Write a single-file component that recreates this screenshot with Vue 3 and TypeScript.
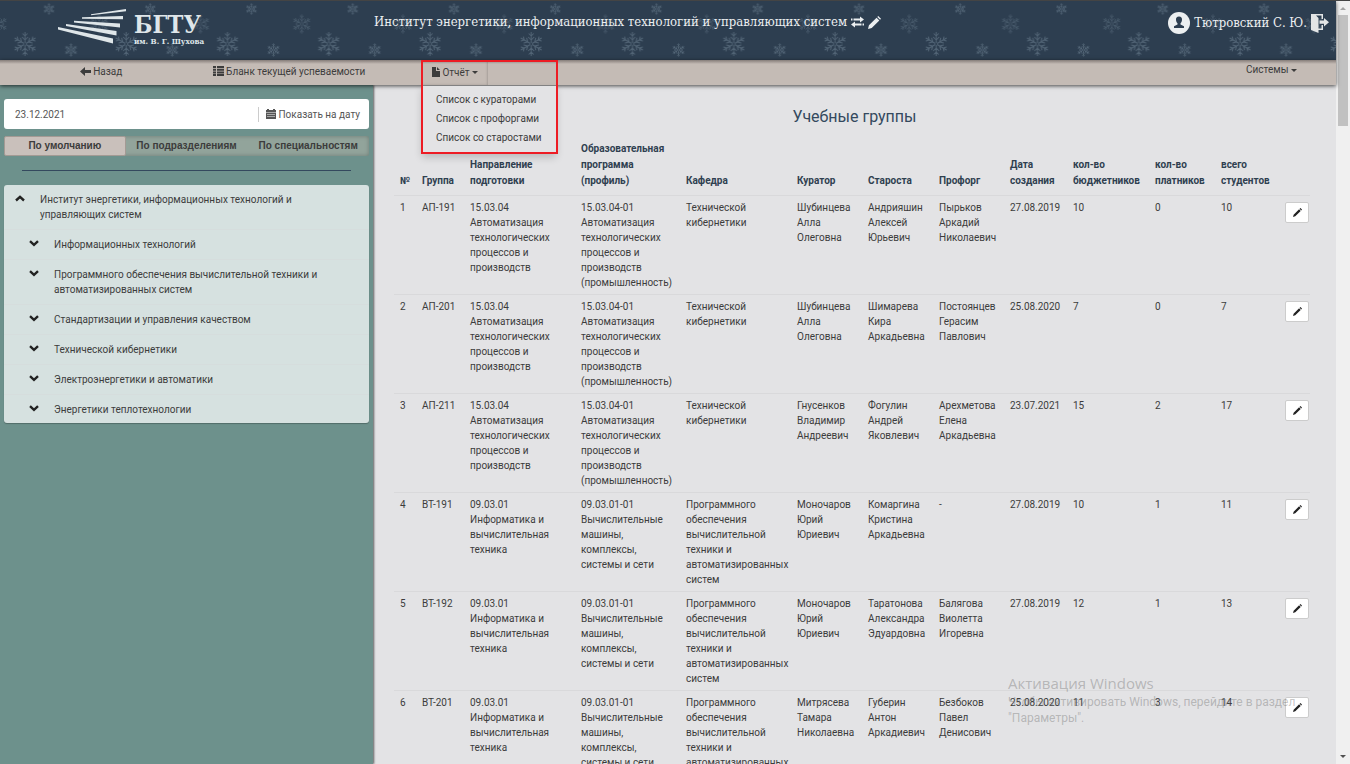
<script setup lang="ts">
import { ref } from 'vue'

interface Group {
  name: string
  direction: string
  programme: string
  department: string
  curator: string
  headman: string
  proforg: string
  created: string
  budget: number
  paid: number
  total: number
}

const date = ref('23.12.2021')
const reports: string[] = ['Список с кураторами', 'Список с профоргами', 'Список со старостами']
const modes: string[] = ['По умолчанию', 'По подразделениям', 'По специальностям']
const activeMode = ref(0)
const departments: string[] = [
  'Информационных технологий',
  'Программного обеспечения вычислительной техники и автоматизированных систем',
  'Стандартизации и управления качеством',
  'Технической кибернетики',
  'Электроэнергетики и автоматики',
  'Энергетики теплотехнологии',
]
const columns: string[] = [
  '№', 'Группа', 'Направление подготовки', 'Образовательная программа (профиль)', 'Кафедра', 'Куратор',
  'Староста', 'Профорг', 'Дата создания', 'кол-во бюджетников', 'кол-во платников', 'всего студентов',
]

const automation = {
  direction: '15.03.04 Автоматизация технологических процессов и производств',
  programme: '15.03.04-01 Автоматизация технологических процессов и производств (промышленность)',
  department: 'Технической кибернетики',
}
const informatics = {
  direction: '09.03.01 Информатика и вычислительная техника',
  programme: '09.03.01-01 Вычислительные машины, комплексы, системы и сети',
  department: 'Программного обеспечения вычислительной техники и автоматизированных систем',
}
const groups: Group[] = [
  { name: 'АП-191', ...automation, curator: 'Шубинцева Алла Олеговна', headman: 'Андрияшин Алексей Юрьевич', proforg: 'Пырьков Аркадий Николаевич', created: '27.08.2019', budget: 10, paid: 0, total: 10 },
  { name: 'АП-201', ...automation, curator: 'Шубинцева Алла Олеговна', headman: 'Шимарева Кира Аркадьевна', proforg: 'Постоянцев Герасим Павлович', created: '25.08.2020', budget: 7, paid: 0, total: 7 },
  { name: 'АП-211', ...automation, curator: 'Гнусенков Владимир Андреевич', headman: 'Фогулин Андрей Яковлевич', proforg: 'Арехметова Елена Аркадьевна', created: '23.07.2021', budget: 15, paid: 2, total: 17 },
  { name: 'ВТ-191', ...informatics, curator: 'Моночаров Юрий Юриевич', headman: 'Комаргина Кристина Аркадьевна', proforg: '-', created: '27.08.2019', budget: 10, paid: 1, total: 11 },
  { name: 'ВТ-192', ...informatics, curator: 'Моночаров Юрий Юриевич', headman: 'Таратонова Александра Эдуардовна', proforg: 'Балягова Виолетта Игоревна', created: '27.08.2019', budget: 12, paid: 1, total: 13 },
  { name: 'ВТ-201', ...informatics, curator: 'Митрясева Тамара Николаевна', headman: 'Губерин Антон Аркадиевич', proforg: 'Безбоков Павел Денисович', created: '25.08.2020', budget: 11, paid: 3, total: 14 },
]
</script>

<template>
  <div class="window">
    <div class="page">
      <header class="top">
        <svg class="snow" aria-hidden="true">
          <defs>
            <g id="flake" fill="none" stroke="#8fa5b5" stroke-width="1">
              <g id="arm"><path d="M0 -1V-12M0 -4L-3 -7M0 -4L3 -7M0 -8L-2.5 -10.5M0 -8L2.5 -10.5" /></g>
              <use href="#arm" transform="rotate(60)" />
              <use href="#arm" transform="rotate(120)" />
              <use href="#arm" transform="rotate(180)" />
              <use href="#arm" transform="rotate(240)" />
              <use href="#arm" transform="rotate(300)" />
            </g>
            <pattern id="snowfall" width="101.25" height="60" patternUnits="userSpaceOnUse">
              <use href="#flake" transform="translate(25 43)" opacity=".36" />
              <use href="#flake" transform="translate(-2 23) scale(.8)" opacity=".28" />
              <use href="#flake" transform="translate(99.25 23) scale(.8)" opacity=".28" />
              <use href="#flake" transform="translate(49 8) scale(.48)" opacity=".48" />
              <use href="#flake" transform="translate(71 49) scale(.55)" opacity=".48" />
            </pattern>
          </defs>
          <rect width="100%" height="100%" fill="url(#snowfall)" />
        </svg>
        <a class="logo" href="#">
          <svg width="70" height="36" viewBox="0 0 70 36" fill="#dfe6e9" aria-hidden="true">
            <path d="M33 5.200 68 0V2.200L33 6.200ZM24 8.200 65 7V10.200L24 9.800ZM16 11.800 62 14.500V18.500L16 13.500ZM8 15 58.500 22V26.500L8 17ZM0 18 55 29.500V34.500L0 20.500Z" />
          </svg>
          <span class="brand"><b>БГТУ</b><small>им. В. Г. Шухова</small></span>
        </a>
        <h1 class="institute">
          Институт энергетики, информационных технологий и управляющих систем
          <button class="plain" aria-label="Сменить институт">
            <svg width="13" height="12" viewBox="0 0 13 12" fill="currentColor"><path d="M0 2.500H1.500V4.500H0ZM2.500 2.500H9V0.500L13 3.500 9 6.500V4.500H2.500ZM13 7.500H11.500V9.500H13ZM10.500 7.500H4V5.500L0 8.500 4 11.500V9.500H10.500Z" /></svg>
          </button>
          <button class="plain" aria-label="Редактировать">
            <svg width="13" height="13" viewBox="0 0 14 14" fill="currentColor"><path d="M0 14 1 10 9.200 1.800 12.200 4.800 4 13ZM10 1 11 0 14 3 13 4Z" /></svg>
          </button>
        </h1>
        <div class="user">
          <svg width="22" height="22" viewBox="0 0 22 22" aria-hidden="true"><circle cx="11" cy="11" r="11" fill="#eceff0" /><path fill="#2d3e50" d="M11 4.500C8.800 4.500 7.800 6 8 8 8.100 9.600 8.800 10.600 9.500 11.300V12.500L6 14.200V16H16V14.200L12.500 12.500V11.300C13.200 10.600 13.900 9.600 14 8 14.200 6 13.200 4.500 11 4.500Z" /></svg>
          <span>Тютровский С. Ю.</span>
          <button class="plain" aria-label="Выйти">
            <svg width="18" height="19" viewBox="0 0 18 19" fill="#e3e5e6"><path d="M0 0H12V5H10.500V1.500H5L7.500 4V19L0 16ZM7.500 14.500H10.500V11H12V16H7.500ZM8.500 6.500H13V4L18 8.200 13 12.500V9.800H8.500Z" /></svg>
          </button>
        </div>
      </header>

      <nav class="menu">
        <a class="back" href="#">
          <svg width="11" height="9" viewBox="0 0 11 9" fill="currentColor"><path d="M0 4.500 5 0V3H11V6H5V9Z" /></svg>
          Назад
        </a>
        <a class="form" href="#">
          <svg width="11" height="10" viewBox="0 0 11 10" fill="currentColor"><path d="M0 0H3V2H0ZM4 0H11V2H4ZM0 2.700H3V4.700H0ZM4 2.700H11V4.700H4ZM0 5.400H3V7.400H0ZM4 5.400H11V7.400H4ZM0 8H3V10H0ZM4 8H11V10H4Z" /></svg>
          Бланк текущей успеваемости
        </a>
        <div class="report">
          <button class="report-toggle" aria-haspopup="true" aria-expanded="true">
            <svg width="8" height="10" viewBox="0 0 8 10" fill="currentColor"><path d="M0 0H4V4H8V10H0ZM5 0 8 3H5Z" /></svg>
            Отчёт
            <i class="caret"></i>
          </button>
          <ul class="report-list">
            <li v-for="item in reports" :key="item"><a href="#">{{ item }}</a></li>
          </ul>
          <div class="highlight"></div>
        </div>
        <button class="systems">Системы <i class="caret"></i></button>
      </nav>

      <div class="content">
        <aside class="side">
          <form class="date" @submit.prevent>
            <input v-model="date" type="text" aria-label="Дата" />
            <button type="submit">
              <svg width="10" height="10" viewBox="0 0 10 10" fill="currentColor"><path d="M0 1H1V0H3V1H7V0H9V1H10V3H0ZM0 3.500H10V10H0Z" /><path d="M1 5.500H9M1 7.500H9" stroke="#fff" stroke-width=".5" /></svg>
              Показать на дату
            </button>
          </form>
          <div class="modes">
            <button
              v-for="(mode, i) in modes"
              :key="mode"
              :class="{ active: i === activeMode }"
              @click="activeMode = i"
            >{{ mode }}</button>
          </div>
          <hr />
          <ul class="tree">
            <li>
              <svg width="10" height="7" viewBox="0 0 10 7"><path d="M1 5.500 5 1.800 9 5.500" fill="none" stroke="#222" stroke-width="2.400" /></svg>
              <a href="#">Институт энергетики, информационных технологий и управляющих систем</a>
            </li>
            <li v-for="item in departments" :key="item" class="child">
              <svg width="10" height="7" viewBox="0 0 10 7"><path d="M1 1.200 5 4.800 9 1.200" fill="none" stroke="#222" stroke-width="2.400" /></svg>
              <a href="#">{{ item }}</a>
            </li>
          </ul>
        </aside>

        <main class="main">
          <h2>Учебные группы</h2>
          <div class="table-box">
            <table>
              <colgroup>
                <col class="w-num" /><col class="w-group" /><col class="w-dir" /><col class="w-prog" /><col class="w-dir" />
                <col class="w-name" /><col class="w-name" /><col class="w-name" /><col class="w-date" /><col class="w-budget" />
                <col class="w-paid" /><col class="w-total" /><col />
              </colgroup>
              <thead>
                <tr>
                  <th v-for="column in columns" :key="column" scope="col">{{ column }}</th>
                  <td></td>
                </tr>
              </thead>
              <tbody>
                <tr v-for="(group, i) in groups" :key="group.name">
                  <td>{{ i + 1 }}</td>
                  <td>{{ group.name }}</td>
                  <td>{{ group.direction }}</td>
                  <td>{{ group.programme }}</td>
                  <td>{{ group.department }}</td>
                  <td>{{ group.curator }}</td>
                  <td>{{ group.headman }}</td>
                  <td>{{ group.proforg }}</td>
                  <td>{{ group.created }}</td>
                  <td>{{ group.budget }}</td>
                  <td>{{ group.paid }}</td>
                  <td>{{ group.total }}</td>
                  <td>
                    <button class="edit" :aria-label="'Редактировать ' + group.name">
                      <svg width="9" height="9" viewBox="0 0 14 14" fill="#222"><path d="M0 14 1 10.500 9.500 2 12 4.500 3.500 13ZM10.300 1.200 11.500 0 14 2.500 12.800 3.700Z" /></svg>
                    </button>
                  </td>
                </tr>
              </tbody>
            </table>
          </div>
        </main>
      </div>
    </div>

    <div class="scrollbar" aria-hidden="true">
      <svg width="14" height="14" viewBox="0 0 14 14"><path d="M4 9 7 6 10 9Z" fill="#a3a3a3" /></svg>
      <div class="thumb"></div>
      <svg width="14" height="14" viewBox="0 0 14 14"><path d="M4 5 7 8 10 5Z" fill="#505050" /></svg>
    </div>

    <div class="activation">
      <strong>Активация Windows</strong>
      <span>Чтобы активировать Windows, перейдите в раздел "Параметры".</span>
    </div>
  </div>
</template>

<style>
body {
  margin: 0;
}
</style>

<style scoped>
* {
  box-sizing: border-box;
}

.window {
  position: relative;
  display: flex;
  height: 100vh;
  overflow: hidden;
  border-top: 1px solid #444;
  background: #e3e3e5;
  color: #3c3c3c;
  font: 10px/15px Roboto, "Liberation Sans", sans-serif;
}

.page {
  display: flex;
  flex: 1;
  flex-direction: column;
  min-width: 0;
}

a {
  color: inherit;
  text-decoration: none;
}

button,
input {
  padding: 0;
  border: 0;
  background: none;
  color: inherit;
  font: inherit;
}

ul {
  margin: 0;
  padding: 0;
  list-style: none;
}

.top {
  position: relative;
  z-index: 2;
  display: flex;
  flex: none;
  align-items: flex-start;
  height: 59px;
  padding: 0 7px 0 58px;
  background: #2d3e50;
  box-shadow: 0 1px 4px rgba(0, 0, 0, 0.7);
  color: #eceff1;
  font-family: "DejaVu Serif Condensed", "DejaVu Serif", serif;
}

.snow {
  position: absolute;
  inset: 0;
  width: 100%;
  height: 100%;
}

.logo,
.institute,
.user {
  position: relative;
}

.logo {
  display: flex;
  flex: none;
  gap: 6px;
  width: 316px;
  padding-top: 8px;
  color: #dfe6e9;
}

.brand b,
.brand small {
  display: block;
}

.brand b {
  font-size: 24px;
  line-height: 32px;
}

.brand small {
  margin-top: -4px;
  font-size: 8px;
  font-weight: bold;
  line-height: 8px;
}

.institute {
  display: flex;
  align-items: center;
  gap: 4px;
  margin: 0;
  padding-top: 11px;
  font-size: 13px;
  font-weight: normal;
  line-height: 20px;
  white-space: nowrap;
}

.user {
  display: flex;
  align-items: center;
  gap: 4px;
  margin-left: auto;
  padding-top: 11px;
  font-size: 13px;
  line-height: 20px;
  white-space: nowrap;
}

.plain svg,
.user svg {
  display: block;
}

.menu {
  position: relative;
  z-index: 3;
  display: flex;
  flex: none;
  height: 25px;
  background: linear-gradient(#857d79, #c4bbb5 4px);
  box-shadow: 0 1px 4px rgba(0, 0, 0, 0.7);
  line-height: 24px;
}

.menu svg {
  vertical-align: -1px;
}

.back {
  width: 202px;
  text-align: center;
}

.form {
  width: 174px;
  text-align: center;
}

.report {
  position: relative;
  margin-left: 46px;
}

.report-toggle {
  width: 66px;
  height: 25px;
  box-shadow: inset -1px 0 2px rgba(0, 0, 0, 0.15);
}

.caret {
  display: inline-block;
  border: 3px solid transparent;
  border-top-color: currentColor;
  border-bottom: 0;
  vertical-align: middle;
}

.report-list {
  position: absolute;
  top: 26px;
  left: 0;
  width: 134px;
  padding: 4px 0 6px 14px;
  background: #e3e3e5;
  box-shadow: 0 4px 8px rgba(0, 0, 0, 0.2);
  line-height: 19px;
}

.report-list a {
  display: block;
}

.highlight {
  position: absolute;
  top: 0;
  left: -1px;
  width: 137px;
  height: 94px;
  border: 2px solid #ed1c24;
  pointer-events: none;
}

.systems {
  align-self: flex-start;
  margin-right: 39px;
  margin-left: auto;
  line-height: 20px;
}

.content {
  display: flex;
  flex: 1;
  min-height: 0;
}

.side {
  position: relative;
  z-index: 1;
  flex: none;
  width: 373px;
  padding: 14px 4px 0;
  background: #6d918c;
  box-shadow: 1px 0 2px rgba(0, 0, 0, 0.6);
}

.date {
  display: flex;
  align-items: center;
  height: 30px;
  padding: 0 9px 0 11px;
  border-radius: 3px;
  background: #fff;
  color: #555;
}

.date svg {
  vertical-align: -1px;
}

.date input {
  flex: 1;
  min-width: 0;
  outline: 0;
}

.date button {
  padding-left: 7px;
  border-left: 1px solid #ccc;
}

.modes {
  display: grid;
  grid-template-columns: 1fr 1fr 1fr;
  height: 20px;
  margin-top: 7px;
  border-radius: 2px;
  background: #92a49b;
  box-shadow: inset 0 0 4px rgba(0, 0, 0, 0.25);
}

.modes button {
  font-family: "Liberation Sans", Arial, sans-serif;
  font-weight: bold;
  line-height: 18px;
}

.modes .active {
  border: 1px solid #a39a94;
  border-radius: 2px;
  background: #c9c0bb;
}

hr {
  height: 1px;
  margin: 14px 18px;
  border: 0;
  background: #34495e;
}

.tree {
  border-radius: 3px;
  background: #d6e1e0;
  box-shadow: 0 1px 1px rgba(0, 0, 0, 0.25);
}

.tree li {
  display: flex;
  gap: 15px;
  padding: 7px 50px 7px 11px;
  border-bottom: 1px solid #d6dddd;
}

.tree li:last-child {
  padding-bottom: 6px;
  border-bottom: 0;
}

.tree .child {
  padding-left: 25px;
}

.tree svg {
  flex: none;
  margin-top: 3px;
}

.main {
  flex: 1;
  min-width: 0;
  padding: 21px 21px 0;
  overflow: hidden;
}

h2 {
  margin: 0 0 13px;
  color: #34495e;
  font-size: 16px;
  font-weight: normal;
  line-height: 22px;
  text-align: center;
}

.table-box {
  padding-right: 5px;
}

table {
  width: 100%;
  border-spacing: 0;
  table-layout: fixed;
}

th {
  padding: 0 0 6px 6px;
  color: #2f4050;
  line-height: 16px;
  text-align: left;
  vertical-align: bottom;
}

tbody td {
  padding: 4px 6px;
  border-top: 1px solid #d9d9db;
  vertical-align: top;
}

tbody td:last-child {
  padding-right: 0;
}

.w-num { width: 22px; }
.w-group { width: 48px; }
.w-dir { width: 111px; }
.w-prog { width: 105px; }
.w-name { width: 71px; }
.w-date { width: 63px; }
.w-budget { width: 82px; }
.w-paid { width: 66px; }
.w-total { width: 64px; }

.edit {
  display: grid;
  place-items: center;
  width: 24px;
  height: 21px;
  margin-top: 2px;
  border: 1px solid #ccc;
  border-radius: 2px;
  background: #fff;
}

.scrollbar {
  display: flex;
  flex: none;
  flex-direction: column;
  justify-content: space-between;
  width: 14px;
  background: #f0f0f0;
}

.thumb {
  width: 10px;
  height: 111px;
  margin: 0 auto auto 2px;
  background: #c1c1c1;
}

.scrollbar svg {
  display: block;
}

.activation {
  position: absolute;
  right: 38px;
  bottom: 38px;
  z-index: 5;
  width: 304px;
  color: rgba(110, 110, 110, 0.4);
  font-size: 12px;
  line-height: 16px;
  pointer-events: none;
}

.activation strong {
  display: block;
  font-family: "Open Sans", "Noto Sans", sans-serif;
  font-size: 15px;
  font-weight: normal;
  line-height: 22px;
}
</style>
